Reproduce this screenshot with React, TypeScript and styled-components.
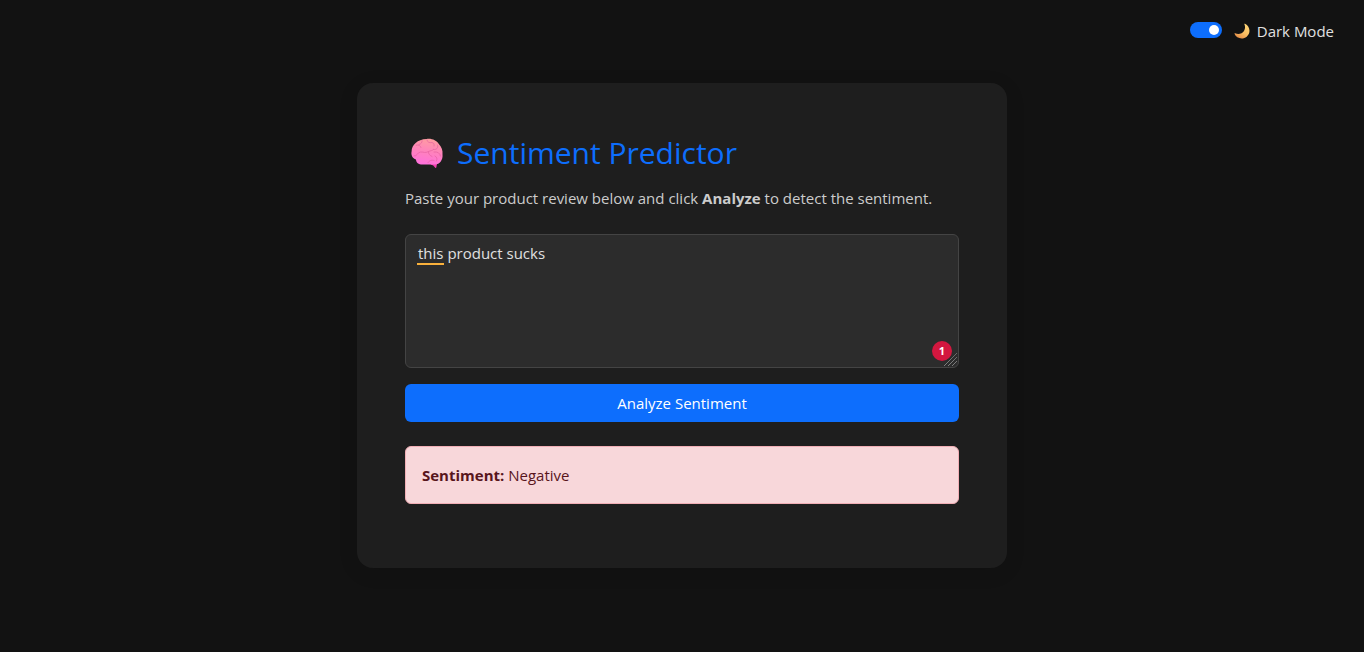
import React, { useState } from "react";
import styled, { createGlobalStyle } from "styled-components";

const GlobalStyle = createGlobalStyle<{ $dark: boolean }>`
  *, *::before, *::after { box-sizing: border-box; }
  body {
    margin: 0;
    background: ${(p) => (p.$dark ? "#121212" : "#f8f9fa")};
    color: ${(p) => (p.$dark ? "#e0e0e0" : "#212529")};
    font-family: "Segoe UI", "Open Sans", "Noto Sans", sans-serif;
    font-size: 15px;
    line-height: 24px;
  }
`;

const Page = styled.div`
  display: flex;
  flex-direction: column;
  min-height: 100vh;
`;

const TopBar = styled.header`
  display: flex;
  justify-content: flex-end;
  padding: 19px 30px 0 16px;
`;

const SwitchLabel = styled.label`
  display: flex;
  align-items: center;
  cursor: pointer;
`;

const Switch = styled.input`
  appearance: none;
  display: flex;
  align-items: center;
  width: 32px;
  height: 16px;
  margin: 0 12px 2px 0;
  padding: 0 3px;
  border-radius: 8px;
  background: #adb5bd;
  cursor: pointer;

  &::before {
    content: "";
    width: 10px;
    height: 10px;
    border-radius: 50%;
    background: #fff;
  }

  &:checked {
    justify-content: flex-end;
    background: #0d6efd;
  }
`;

const MoonIcon = styled.svg`
  width: 16px;
  height: 16px;
  margin-right: 7px;
`;

const Main = styled.main`
  display: flex;
  justify-content: center;
  padding: 40px 16px;
`;

const Card = styled.section<{ $dark: boolean }>`
  width: 100%;
  max-width: 650px;
  padding: 50px 48px 64px;
  border-radius: 16px;
  background: ${(p) => (p.$dark ? "#1e1e1e" : "#fff")};
  box-shadow: 0 4px 20px rgba(0, 0, 0, 0.1);
`;

const Title = styled.h1`
  display: flex;
  align-items: center;
  margin: 0 0 14px;
  color: #0d6efd;
  font-size: 30px;
  font-weight: 400;
  line-height: 39px;
`;

const BrainIcon = styled.svg`
  width: 34px;
  height: 32px;
  margin: 0 13px 0 5px;
`;

const Intro = styled.p<{ $dark: boolean }>`
  margin: 0 0 24px;
  color: ${(p) => (p.$dark ? "#ccc" : "#6c757d")};
`;

const Editor = styled.div`
  position: relative;
  margin-bottom: 16px;
`;

const ReviewBox = styled.textarea<{ $dark: boolean }>`
  display: block;
  width: 100%;
  height: 134px;
  padding: 6px 12px;
  border: 1px solid #444;
  border-radius: 6px;
  outline: none;
  resize: vertical;
  background: ${(p) => (p.$dark ? "#2c2c2c" : "#fff")};
  color: inherit;
  font: inherit;

  &::-webkit-resizer {
    background: transparent;
  }
`;

const SpellingMark = styled.span`
  position: absolute;
  top: 29px;
  left: 12px;
  width: 27px;
  height: 2px;
  background: #f9b13c;
`;

const IssueBadge = styled.span`
  position: absolute;
  right: 7px;
  bottom: 7px;
  width: 20px;
  height: 20px;
  border-radius: 50%;
  background: #d3173f;
  color: #fff;
  font-size: 11px;
  font-weight: 700;
  line-height: 20px;
  text-align: center;
`;

const Grip = styled.svg`
  position: absolute;
  right: 1px;
  bottom: 1px;
  width: 15px;
  height: 15px;
  pointer-events: none;
`;

const AnalyzeButton = styled.button`
  display: block;
  width: 100%;
  height: 38px;
  padding: 0 12px;
  border: 0;
  border-radius: 6px;
  background: #0d6efd;
  color: #fff;
  font: inherit;
  cursor: pointer;
`;

const Result = styled.div`
  margin-top: 24px;
  padding: 16px;
  border: 1px solid #f1aeb5;
  border-radius: 6px;
  background: #f8d7da;
  color: #58151c;
`;

function Moon() {
  return (
    <MoonIcon viewBox="0 0 16 16" aria-hidden="true">
      <defs>
        <linearGradient id="moon" x1="0.9" y1="0" x2="0.3" y2="1">
          <stop offset="0" stopColor="#ffd879" />
          <stop offset="0.6" stopColor="#f9bd62" />
          <stop offset="1" stopColor="#e58d48" />
        </linearGradient>
      </defs>
      <path
        d="M11 .7C16.2 3.2 17 10.300 12.700 13.700C8.700 17 2.200 15.500 .5 10.800C.4 10.300 .8 10.100 1.200 10.300C4.500 11.700 8.300 10.700 10 8C11.400 5.800 11.300 3.300 10.400 1.300C10.200 .8 10.500 .5 11 .7Z"
        fill="url(#moon)"
      />
    </MoonIcon>
  );
}

function Brain() {
  return (
    <BrainIcon viewBox="0 0 34 32" aria-hidden="true">
      <defs>
        <linearGradient id="brain" x1="0.6" y1="0" x2="0.4" y2="1">
          <stop offset="0" stopColor="#ff9da0" />
          <stop offset="0.5" stopColor="#ff82bd" />
          <stop offset="1" stopColor="#ff70dc" />
        </linearGradient>
      </defs>
      <path d="M20 25L27.500 24.500L26.300 30.600Q25.800 31.500 25 30.400Q23.500 28.200 20.800 27.500Z" fill="#ee3fac" />
      <path
        d="M16.500 2C22 1.200 26.500 3.600 28.800 7C31.500 9.500 33 13.500 32.500 17.500C33.200 22.500 29.800 27.500 25 27.500L12.500 27.500C8.500 27.500 6 25.500 6 22.500C2.500 21.500 .8 18 1.600 14.500C1.600 8 7.500 2.300 16.500 2Z"
        fill="url(#brain)"
      />
      <g fill="none" stroke="#e5609f" strokeWidth="0.8" strokeLinecap="round" opacity="0.8">
        <path d="M12 3.500C12.500 5.500 11 7 9 7.500M6.200 8.200C8.500 7.500 10.500 8.500 11 10.500" />
        <path d="M17 3C17.500 5.500 19.500 6 22 5.500C24 6 24.500 7.500 24 9" />
        <path d="M4 19C7.500 19.500 7 15.500 10.500 15C14 14.800 15 16.500 18.500 14.500C20.500 13.500 22 14 23.500 12.500" />
        <path d="M27.500 8C28.500 11 26.500 13 23.500 12.500M24 15C27.500 14.500 30 16 30.500 19" />
        <path d="M18.500 14.500C18 17 20 18.500 22 19.500M25 19C27 20 27.500 22 26.500 24M18 25.500C20 23 22 23 24 23.500" />
      </g>
    </BrainIcon>
  );
}

export default function App() {
  const [dark, setDark] = useState(true);
  const [review, setReview] = useState("this product sucks");
  const [sentiment, setSentiment] = useState("Negative");

  const analyze = () =>
    setSentiment(/sucks|bad|awful|terrible|poor/i.test(review) ? "Negative" : "Positive");

  return (
    <Page>
      <GlobalStyle $dark={dark} />
      <TopBar>
        <SwitchLabel>
          <Switch type="checkbox" role="switch" checked={dark} onChange={(e) => setDark(e.target.checked)} />
          <Moon />
          Dark Mode
        </SwitchLabel>
      </TopBar>
      <Main>
        <Card $dark={dark}>
          <Title>
            <Brain />
            Sentiment Predictor
          </Title>
          <Intro $dark={dark} id="review-help">
            Paste your product review below and click <strong>Analyze</strong> to detect the sentiment.
          </Intro>
          <Editor>
            <ReviewBox
              $dark={dark}
              aria-label="Product review"
              aria-describedby="review-help"
              spellCheck={false}
              value={review}
              onChange={(e) => setReview(e.target.value)}
            />
            {review.startsWith("this ") && <SpellingMark />}
            <IssueBadge>1</IssueBadge>
            <Grip viewBox="0 0 15 15" aria-hidden="true">
              <path d="M1 14L14 1M5 14L14 5M9 14L14 9" stroke="#a0a0a0" strokeWidth="1" strokeDasharray="1 0.5" />
            </Grip>
          </Editor>
          <AnalyzeButton type="button" onClick={analyze}>
            Analyze Sentiment
          </AnalyzeButton>
          <Result role="status">
            <strong>Sentiment:</strong> {sentiment}
          </Result>
        </Card>
      </Main>
    </Page>
  );
}
